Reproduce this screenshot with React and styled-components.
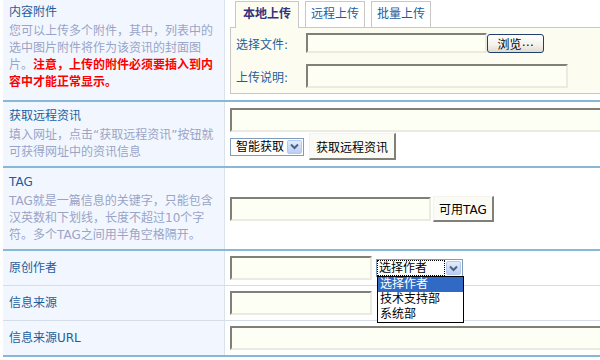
import React from "react";
import styled, { createGlobalStyle } from "styled-components";

const GlobalStyle = createGlobalStyle`
  html, body { margin: 0; padding: 0; background: #fff; overflow: hidden; }
  body {
    font-family: "DejaVu Sans", "Noto Sans CJK SC", sans-serif;
    font-size: 12px;
    color: #000;
  }
  * { box-sizing: border-box; }
`;

const Page = styled.div`
  padding-left: 3px;
  width: 780px;
`;

const Row = styled.div`
  display: grid;
  grid-template-columns: 222px 540px;
  border-bottom: ${(p) => (p.$thin ? "1px solid #d5dde9" : "2px solid #88b8d7")};
`;

const LabelCell = styled.div`
  background: #f2f7ff;
  border-right: 1px solid #dae2ec;
  padding: ${(p) => (p.$top ? "3px 6px 5px" : "5px 6px")};
  display: flex;
  flex-direction: column;
  justify-content: ${(p) => (p.$top ? "flex-start" : "center")};
  white-space: nowrap;
`;

const Title = styled.div`
  color: #1d5d9e;
  line-height: 18px;
`;

const Desc = styled.div`
  color: #9aa4c6;
  line-height: 17px;
  margin-top: 2px;
`;

const Warn = styled.span`
  color: #ff0000;
  font-weight: bold;
`;

const FieldCell = styled.div`
  padding: ${(p) => p.$pad || "5px"};
  display: flex;
  flex-direction: column;
  justify-content: center;
  align-items: flex-start;
  gap: ${(p) => p.$gap || 0}px;
`;

const Line = styled.div`
  display: flex;
  align-items: center;
  gap: ${(p) => p.$gap || 0}px;
`;

const TabBar = styled.div`
  display: flex;
  gap: 6px;
  margin-left: 5px;
  position: relative;
  z-index: 1;
`;

const Tab = styled.div`
  height: ${(p) => (p.$active ? 27 : 26)}px;
  margin-bottom: ${(p) => (p.$active ? -1 : 0)}px;
  line-height: 25px;
  padding: 0 ${(p) => (p.$active ? 7 : 5)}px;
  border: 1px solid #c8c8c8;
  border-bottom: none;
  background: ${(p) => (p.$active ? "#fcfdf0" : "#fff")};
  color: ${(p) => (p.$active ? "#333380" : "#1d5d9e")};
  font-weight: ${(p) => (p.$active ? "bold" : "normal")};
`;

const Panel = styled.div`
  width: 500px;
  border: 1px solid #c8c8c8;
  background: #fcfdf0;
  padding: 5px;
  display: grid;
  grid-template-columns: 70px auto;
  row-gap: 11px;
  align-items: center;
`;

const PanelLabel = styled.div`
  color: #1d5d9e;
`;

const TextBox = styled.input`
  width: ${(p) => p.$w}px;
  height: ${(p) => p.$h || 24}px;
  border: 2px solid;
  border-color: #808078 #ecebe0 #ecebe0 #808078;
  background: #fdfef4;
  margin: 0;
  padding: 0 2px;
  font: inherit;
`;

const BrowseButton = styled.div`
  width: 57px;
  height: 19px;
  margin-top: 1px;
  border: 1px solid #1f3f6f;
  border-radius: 3px;
  background: linear-gradient(#ffffff, #f2f1ea 60%, #dedbd0);
  display: flex;
  align-items: center;
  justify-content: center;
`;

const Button = styled.div`
  height: ${(p) => p.$h || 27}px;
  padding: 0 ${(p) => p.$px || 6}px;
  background: #fbfbf5;
  border-style: solid;
  border-width: 1px 2px 2px 1px;
  border-color: #f4f4ec #808078 #808078 #f4f4ec;
  display: flex;
  align-items: center;
  white-space: nowrap;
`;

const Select = styled.div`
  position: relative;
  width: ${(p) => p.$w}px;
  height: 18px;
  border: 1px solid #7f9db9;
  background: #fff;
  display: flex;
  align-items: center;
  justify-content: space-between;
  padding: 0 1px 0 ${(p) => (p.$focus ? 0 : 3)}px;
`;

const SelectText = styled.span`
  line-height: 14px;
  flex: ${(p) => (p.$focus ? 1 : "none")};
  padding: 0 1px;
  border: 1px dotted ${(p) => (p.$focus ? "#000" : "transparent")};
  margin-right: 1px;
`;

const ArrowBox = styled.span`
  width: 15px;
  height: 14px;
  border: 1px solid #b5c9ee;
  border-radius: 2px;
  background: linear-gradient(#e3ecfd, #b9cdf5);
  display: flex;
  align-items: center;
  justify-content: center;
`;

const Menu = styled.div`
  position: absolute;
  top: 100%;
  left: 0;
  width: 87px;
  border: 1px solid #000;
  background: #fff;
  z-index: 5;
`;

const MenuItem = styled.div`
  height: 15px;
  line-height: 15px;
  padding-left: 2px;
  background: ${(p) => (p.$on ? "#316ac5" : "#fff")};
  color: ${(p) => (p.$on ? "#fff" : "#000")};
`;

const Chevron = () => (
  <svg width="9" height="7" viewBox="0 0 9 7">
    <path d="M1 1.5 L4.5 5 L8 1.5" fill="none" stroke="#4d6185" strokeWidth="2" />
  </svg>
);

const App = () => (
  <>
    <GlobalStyle />
    <Page>
      <Row>
        <LabelCell $top>
          <Title>内容附件</Title>
          <Desc>
            您可以上传多个附件，其中，列表中的
            <br />
            选中图片附件将作为该资讯的封面图
            <br />
            片。<Warn>注意，上传的附件必须要插入到内</Warn>
            <br />
            <Warn>容中才能正常显示。</Warn>
          </Desc>
        </LabelCell>
        <FieldCell $pad="1px 5px 6px">
          <TabBar>
            <Tab $active>本地上传</Tab>
            <Tab>远程上传</Tab>
            <Tab>批量上传</Tab>
          </TabBar>
          <Panel>
            <PanelLabel>选择文件:</PanelLabel>
            <Line>
              <TextBox $w={181} $h={20} />
              <BrowseButton>浏览⋯</BrowseButton>
            </Line>
            <PanelLabel>上传说明:</PanelLabel>
            <TextBox $w={262} />
          </Panel>
        </FieldCell>
      </Row>

      <Row>
        <LabelCell>
          <Title>获取远程资讯</Title>
          <Desc>
            填入网址，点击“获取远程资讯”按钮就
            <br />
            可获得网址中的资讯信息
          </Desc>
        </LabelCell>
        <FieldCell $gap={1}>
          <TextBox $w={460} />
          <Line $gap={5}>
            <Select $w={74}>
              <SelectText>智能获取</SelectText>
              <ArrowBox>
                <Chevron />
              </ArrowBox>
            </Select>
            <Button>获取远程资讯</Button>
          </Line>
        </FieldCell>
      </Row>

      <Row>
        <LabelCell>
          <Title>TAG</Title>
          <Desc>
            TAG就是一篇信息的关键字，只能包含
            <br />
            汉英数和下划线，长度不超过10个字
            <br />
            符。多个TAG之间用半角空格隔开。
          </Desc>
        </LabelCell>
        <FieldCell>
          <Line $gap={2}>
            <TextBox $w={201} />
            <Button $h={26} $px={5}>可用TAG</Button>
          </Line>
        </FieldCell>
      </Row>

      <Row $thin>
        <LabelCell>
          <Title>原创作者</Title>
        </LabelCell>
        <FieldCell>
          <Line $gap={4}>
            <TextBox $w={142} />
            <Select $w={87} $focus>
              <SelectText $focus>选择作者</SelectText>
              <ArrowBox>
                <Chevron />
              </ArrowBox>
              <Menu>
                <MenuItem $on>选择作者</MenuItem>
                <MenuItem>技术支持部</MenuItem>
                <MenuItem>系统部</MenuItem>
              </Menu>
            </Select>
          </Line>
        </FieldCell>
      </Row>

      <Row $thin>
        <LabelCell>
          <Title>信息来源</Title>
        </LabelCell>
        <FieldCell>
          <TextBox $w={142} />
        </FieldCell>
      </Row>

      <Row>
        <LabelCell>
          <Title>信息来源URL</Title>
        </LabelCell>
        <FieldCell>
          <TextBox $w={460} />
        </FieldCell>
      </Row>
    </Page>
  </>
);

export default App;
